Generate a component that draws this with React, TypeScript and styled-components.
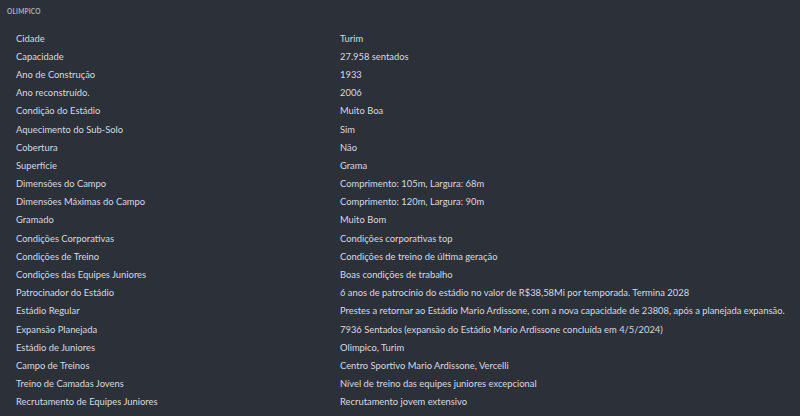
import React from "react";
import styled, { createGlobalStyle } from "styled-components";

const Global = createGlobalStyle`
  html, body { margin: 0; padding: 0; background: #2c3039; }
  body { font-family: Lato, "Noto Sans", "Liberation Sans", sans-serif; }
`;

const Page = styled.div`
  width: 800px;
  height: 416px;
  background: #2c3039;
  overflow: hidden;
  display: flex;
  flex-direction: column;
`;

const Title = styled.div`
  height: 29px;
  padding: 0 0 7px 7px;
  box-sizing: border-box;
  display: flex;
  align-items: center;
  font-size: 6.5px;
  font-weight: 700;
  letter-spacing: 0.2px;
  color: #a9afba;
  text-transform: uppercase;
`;

const Table = styled.div`
  display: flex;
  flex-direction: column;
  padding-left: 16px;
`;

const Row = styled.div`
  height: 18.2px;
  display: grid;
  grid-template-columns: 324px 1fr;
  align-items: center;
  font-size: 9.4px;
  color: #d6dae0;
  white-space: nowrap;
`;

const Cell = styled.div``;

const rows: [string, string][] = [
  ["Cidade", "Turim"],
  ["Capacidade", "27.958 sentados"],
  ["Ano de Construção", "1933"],
  ["Ano reconstruído.", "2006"],
  ["Condição do Estádio", "Muito Boa"],
  ["Aquecimento do Sub-Solo", "Sim"],
  ["Cobertura", "Não"],
  ["Superfície", "Grama"],
  ["Dimensões do Campo", "Comprimento: 105m, Largura: 68m"],
  ["Dimensões Máximas do Campo", "Comprimento: 120m, Largura: 90m"],
  ["Gramado", "Muito Bom"],
  ["Condições Corporativas", "Condições corporativas top"],
  ["Condições de Treino", "Condições de treino de última geração"],
  ["Condições das Equipes Juniores", "Boas condições de trabalho"],
  ["Patrocinador do Estádio", "6 anos de patrocínio do estádio no valor de R$38,58Mi por temporada. Termina 2028"],
  ["Estádio Regular", "Prestes a retornar ao Estádio Mario Ardissone, com a nova capacidade de 23808, após a planejada expansão."],
  ["Expansão Planejada", "7936 Sentados (expansão do Estádio Mario Ardissone concluída em 4/5/2024)"],
  ["Estádio de Juniores", "Olimpico, Turim"],
  ["Campo de Treinos", "Centro Sportivo Mario Ardissone, Vercelli"],
  ["Treino de Camadas Jovens", "Nível de treino das equipes juniores excepcional"],
  ["Recrutamento de Equipes Juniores", "Recrutamento jovem extensivo"],
];

export default function App() {
  return (
    <Page>
      <Global />
      <Title>Olimpico</Title>
      <Table>
        {rows.map(([k, v]) => (
          <Row key={k}>
            <Cell>{k}</Cell>
            <Cell>{v}</Cell>
          </Row>
        ))}
      </Table>
    </Page>
  );
}
